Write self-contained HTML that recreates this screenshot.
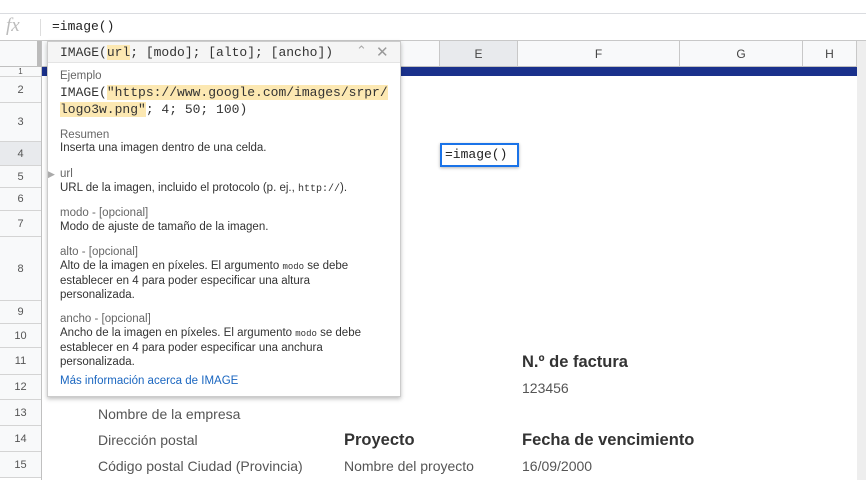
<!DOCTYPE html>
<html><head><meta charset="utf-8"><style>
*{margin:0;padding:0;box-sizing:border-box}
body{width:866px;height:480px;overflow:hidden;background:#fff;font-family:"Liberation Sans",sans-serif;position:relative;color:#222}
.a{position:absolute}
.mono{font-family:"Liberation Mono",monospace}
.rn{position:absolute;left:0;width:41px;text-align:center;font-size:11px;color:#555;border-bottom:1px solid #d4d4d4;background:#f8f9fa;display:flex;align-items:center;justify-content:center}
.ch{position:absolute;top:41px;height:26px;font-size:12px;color:#444;display:flex;align-items:center;justify-content:center;border-right:1px solid #c8c8c8;background:#f8f9fa;border-bottom:1px solid #c0c0c0}
.p{position:absolute;left:12px;font-size:11.5px;color:#333;line-height:14px}
.g{color:#666}
.t{font-size:15px;color:#555}
.b{font-size:16.5px;font-weight:bold;color:#333}
</style></head><body>
<div class="a" style="left:0;top:0;width:866px;height:14px;border-bottom:1px solid #dadce0"></div>
<div class="a" style="left:0;top:14px;width:866px;height:27px;border-bottom:1px solid #c8c8c8"></div>
<div class="a" style="left:6px;top:15px;font-family:'Liberation Serif',serif;font-style:italic;font-size:19px;color:#bbb">fx</div>
<div class="a" style="left:40px;top:19px;width:1px;height:17px;background:#ddd"></div>
<div class="a mono" style="left:52px;top:19px;font-size:13px;color:#222">=image()</div>
<div class="a" style="left:857px;top:41px;width:9px;height:439px;background:#eee"></div>
<div class="ch" style="left:0;width:41px;border-right:4px solid #bbb"></div>
<div class="ch" style="left:41px;width:399px"></div>
<div class="ch" style="left:440px;width:78px;background:#e8eaed">E</div>
<div class="ch" style="left:518px;width:162px">F</div>
<div class="ch" style="left:680px;width:123px">G</div>
<div class="ch" style="left:803px;width:54px">H</div>
<div class="a" style="left:41px;top:67px;width:816px;height:9px;background:#1a318c"></div>
<div class="rn" style="top:67px;height:10px;font-size:8px">1</div>
<div class="rn" style="top:77px;height:26px">2</div>
<div class="rn" style="top:103px;height:39px">3</div>
<div class="rn" style="top:142px;height:24px;background:#e8eaed">4</div>
<div class="rn" style="top:166px;height:22px">5</div>
<div class="rn" style="top:188px;height:23px">6</div>
<div class="rn" style="top:211px;height:26px">7</div>
<div class="rn" style="top:237px;height:64px">8</div>
<div class="rn" style="top:301px;height:23px">9</div>
<div class="rn" style="top:324px;height:24px">10</div>
<div class="rn" style="top:348px;height:27px">11</div>
<div class="rn" style="top:375px;height:25px">12</div>
<div class="rn" style="top:400px;height:26px">13</div>
<div class="rn" style="top:426px;height:26px">14</div>
<div class="rn" style="top:452px;height:26px">15</div>
<div class="a" style="left:41px;top:41px;width:1px;height:439px;background:#c0c0c0"></div>
<div class="a mono" style="left:440px;top:143px;width:79px;height:24px;border:2px solid #1a73e8;font-size:13px;padding:2px 0 0 3px;box-shadow:0 1px 3px rgba(0,0,0,.3);background:#fff">=image()</div>
<div class="a b" style="left:522px;top:353px">N.º de factura</div>
<div class="a t" style="left:522px;top:380px;font-size:14px">123456</div>
<div class="a t" style="left:98px;top:406px;font-size:14px">Nombre de la empresa</div>
<div class="a t" style="left:98px;top:432px;font-size:14px">Dirección postal</div>
<div class="a b" style="left:344px;top:431px">Proyecto</div>
<div class="a b" style="left:522px;top:431px">Fecha de vencimiento</div>
<div class="a t" style="left:98px;top:458px;font-size:14px">Código postal Ciudad (Provincia)</div>
<div class="a t" style="left:344px;top:458px;font-size:14px">Nombre del proyecto</div>
<div class="a t" style="left:522px;top:458px;font-size:14px">16/09/2000</div>
<div class="a" style="left:47px;top:41px;width:354px;height:356px;background:#fff;border:1px solid #ccc;box-shadow:0 2px 4px rgba(0,0,0,.25)">
 <div class="a" style="left:0;top:0;width:352px;height:21px;background:#f5f5f5;border-bottom:1px solid #e4e4e4"></div>
 <div class="a mono" style="left:12px;top:3px;font-size:13px;color:#333">IMAGE(<span style="background:#fce8b2">url</span>; [modo]; [alto]; [ancho])</div>
 <div class="a" style="left:308px;top:1px;font-size:13px;color:#aaa">&#8963;</div>
 <div class="a" style="left:328px;top:1px;font-size:15px;color:#999">✕</div>
 <div class="p g" style="top:27px">Ejemplo</div>
 <div class="p mono" style="top:42px;font-size:13px;line-height:17px;color:#333">IMAGE(<span style="background:#fce8b2">"https://www.google.com/images/srpr/<br>logo3w.png"</span>; 4; 50; 100)</div>
 <div class="p g" style="top:86px">Resumen</div>
 <div class="p" style="top:99px">Inserta una imagen dentro de una celda.</div>
 <div class="a" style="left:0;top:127px;font-size:9px;color:#aaa">▶</div>
 <div class="p g" style="top:125px">url</div>
 <div class="p" style="top:139px">URL de la imagen, incluido el protocolo (p. ej., <span class="mono" style="font-size:10px">http://</span>).</div>
 <div class="p g" style="top:164px">modo - [opcional]</div>
 <div class="p" style="top:178px">Modo de ajuste de tamaño de la imagen.</div>
 <div class="p g" style="top:203px">alto - [opcional]</div>
 <div class="p" style="top:217px">Alto de la imagen en píxeles. El argumento <span class="mono" style="font-size:9px">modo</span> se debe<br>establecer en 4 para poder especificar una altura<br>personalizada.</div>
 <div class="p g" style="top:270px">ancho - [opcional]</div>
 <div class="p" style="top:284px">Ancho de la imagen en píxeles. El argumento <span class="mono" style="font-size:9px">modo</span> se debe<br>establecer en 4 para poder especificar una anchura<br>personalizada.</div>
 <div class="p" style="top:332px;color:#1a66c0">Más información acerca de IMAGE</div>
</div>
</body></html>
